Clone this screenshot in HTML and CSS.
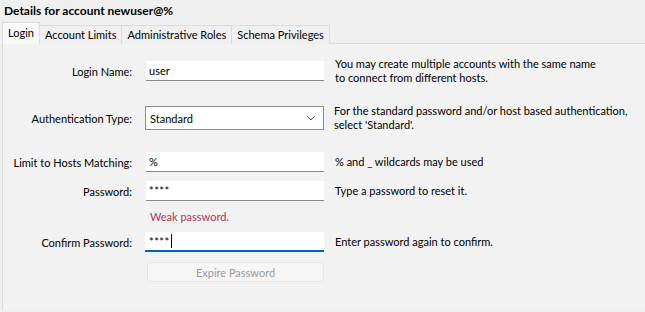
FILE: index.html
```html
<!DOCTYPE html>
<html lang="en">
<head>
    <meta charset="UTF-8">
    <title>Details for account newuser@%</title>
    <link rel="stylesheet" href="styles.css">
</head>
<body>
    <h1 class="title">Details for account newuser@%</h1>

    <div class="tabs">
        <a class="tab active" href="#">Login</a>
        <a class="tab" href="#">Account Limits</a>
        <a class="tab" href="#">Administrative Roles</a>
        <a class="tab" href="#">Schema Privileges</a>
    </div>

    <div class="panel">
        <div class="row row-login">
            <label class="label" for="login">Login Name:</label>
            <input class="field" id="login" type="text" value="user">
            <p class="hint">You may create multiple accounts with the same name<br>to connect from different hosts.</p>
        </div>

        <div class="row row-auth">
            <label class="label" for="auth">Authentication Type:</label>
            <div class="select" id="auth">
                <span>Standard</span>
                <svg width="10" height="6" viewBox="0 0 10 6"><path d="M1 1 L5 5 L9 1" fill="none" stroke="#606060" stroke-width="1"/></svg>
            </div>
            <p class="hint">For the standard password and/or host based authentication,<br>select 'Standard'.</p>
        </div>

        <div class="row row-hosts">
            <label class="label" for="hosts">Limit to Hosts Matching:</label>
            <input class="field" id="hosts" type="text" value="%">
            <p class="hint">% and _ wildcards may be used</p>
        </div>

        <div class="row row-pass">
            <label class="label" for="pass">Password:</label>
            <input class="field stars" id="pass" type="text" value="****">
            <p class="hint">Type a password to reset it.</p>
        </div>

        <div class="row row-weak">
            <span class="label"></span>
            <p class="weak">Weak password.</p>
        </div>

        <div class="row row-confirm">
            <label class="label" for="confirm">Confirm Password:</label>
            <div class="field stars focused" id="confirm">****<span class="caret"></span></div>
            <p class="hint">Enter password again to confirm.</p>
        </div>

        <div class="row row-expire">
            <span class="label"></span>
            <button class="expire" disabled>Expire Password</button>
        </div>
    </div>
</body>
</html>
```

FILE: styles.css
```css
body {
    margin: 0;
    padding: 0;
    background: #f0f0f0;
    font-family: Lato, "Noto Sans", sans-serif;
    font-size: 11px;
    color: #000;
    overflow: hidden;
}

.title {
    margin: 0;
    padding: 3px 0 0 4px;
    height: 19px;
    font-size: 12px;
    font-weight: bold;
    line-height: 16px;
}

.tabs {
    display: flex;
    align-items: flex-end;
    height: 22px;
    padding-left: 2px;
}
.tab {
    display: block;
    height: 18px;
    line-height: 17px;
    padding: 0 5px;
    border: 1px solid #dcdcdc;
    border-bottom: none;
    margin-left: -1px;
    background: #f0f0f0;
    color: #000;
    text-decoration: none;
    white-space: nowrap;
}
.tab.active {
    height: 21px;
    line-height: 20px;
    margin-left: 0;
    background: #f9f9f9;
    position: relative;
    z-index: 1;
}

.panel {
    margin-left: 2px;
    border-top: 1px solid #dcdcdc;
    border-left: 1px solid #dcdcdc;
    background: #f2f2f2;
    height: 266px;
    margin-top: -1px;
}

.row {
    display: flex;
    align-items: center;
    white-space: nowrap;
}
.label {
    width: 129px;
    flex: none;
    text-align: right;
    margin-right: 14px;
}
.field {
    width: 178px;
    height: 20px;
    flex: none;
    box-sizing: border-box;
    border: none;
    border-bottom: 1px solid #8a8a8a;
    background: #fff;
    padding: 0 3px;
    font: inherit;
    line-height: 19px;
    outline: none;
}
.hint {
    margin: 0 0 0 11px;
    line-height: 14px;
}

.row-login { margin-top: 13px; }
.row-auth { margin-top: 19px; }
.row-hosts { margin-top: 20px; }
.row-pass { margin-top: 9px; }
.row-weak { margin-top: 7px; height: 16px; }
.row-confirm { margin-top: 8px; }
.row-expire { margin-top: 10px; }

.select {
    width: 179px;
    height: 24px;
    flex: none;
    box-sizing: border-box;
    border: 1px solid #8c8c8c;
    background: #fff;
    display: flex;
    align-items: center;
    justify-content: space-between;
    padding: 0 7px 0 4px;
    margin-left: -1px;
    margin-right: -1px;
}

.stars {
    letter-spacing: 0.5px;
}
.focused {
    border-bottom: 2px solid #0067c0;
    display: flex;
    align-items: center;
    margin-left: -1px;
    width: 179px;
    padding-left: 4px;
}
.caret {
    display: inline-block;
    width: 1px;
    height: 14px;
    background: #000;
    margin-left: 1px;
}

.weak {
    margin: 0;
    padding-left: 4px;
    color: #b2325b;
}

.expire {
    width: 177px;
    height: 20px;
    flex: none;
    margin-left: 1px;
    border: 1px solid #e5e5e5;
    border-radius: 3px;
    background: #f6f6f6;
    color: #9c9c9c;
    font: inherit;
    padding: 0;
}
```
